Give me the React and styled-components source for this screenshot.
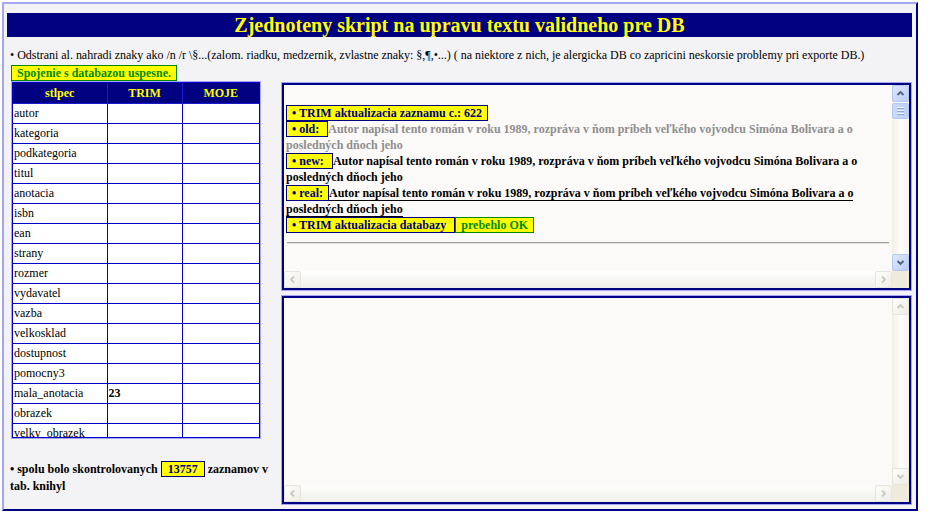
import React from "react";
import styled, { createGlobalStyle, css } from "styled-components";

const GlobalStyle = createGlobalStyle`
  html, body { margin: 0; padding: 0; background: #ffffff; }
  body { font-family: "Liberation Serif", "Times New Roman", serif; }
`;

const NAVY = "#000080";
const LAV = "#a6a6f2";
const YEL = "#ffff00";
const GREEN = "#008800";

const Frame = styled.div`
  box-sizing: border-box;
  margin: 2px 0 0 2px;
  width: 916px;
  height: 509px;
  border-style: solid;
  border-width: 2px;
  border-color: ${LAV} ${NAVY} ${NAVY} ${LAV};
  background: #f3f3f5;
  padding: 9px 4px 0 3px;
  overflow: hidden;
`;

const Title = styled.h1`
  margin: 0;
  height: 24px;
  line-height: 24px;
  background: ${NAVY};
  color: ${YEL};
  font-size: 20px;
  font-weight: bold;
  text-align: center;
`;

const Info = styled.div`
  margin: 11px 0 0 3px;
  font-size: 12px;
  line-height: 15px;
  color: #000;
  white-space: nowrap;
  letter-spacing: -0.02px;
`;

const Status = styled.div`
  display: inline-block;
  margin: 0 0 0 4px;
  border: 1px solid ${GREEN};
  background: ${YEL};
  color: ${GREEN};
  font-weight: bold;
  font-size: 12px;
  line-height: 14px;
  padding: 0 5px;
`;

const Main = styled.div`
  display: flex;
  align-items: flex-start;
  margin-top: 0;
`;

const LeftCol = styled.div`
  width: 268px;
  margin-left: 3px;
  flex: none;
`;

const TableWrap = styled.div`
  width: 248px;
  margin-left: 1px;
  border: 1px solid ${LAV};
`;

const Clip = styled.div`
  height: 354px;
  overflow: hidden;
  border: 1px solid #0000c8;
  background: #fff;
`;

const Table = styled.table`
  border-collapse: collapse;
  border-style: hidden;
  width: 246px;
  table-layout: fixed;
  font-size: 12px;
`;

const Th = styled.th`
  background: ${NAVY};
  color: ${YEL};
  font-weight: bold;
  height: 20px;
  padding: 0;
  border: 1px solid #1a1ad0;
  text-align: center;
`;

const Td = styled.td`
  height: 19px;
  padding: 0 0 0 1px;
  border: 1px solid #0000c8;
  color: #000;
  font-weight: ${(p) => (p.$bold ? "bold" : "normal")};
  white-space: nowrap;
  overflow: hidden;
  vertical-align: middle;
`;

const Summary = styled.p`
  margin: 22px 0 0 0;
  font-size: 12px;
  font-weight: bold;
  line-height: 17px;
  color: #000;
`;

const Count = styled.span`
  background: ${YEL};
  border: 1px solid ${NAVY};
  color: ${NAVY};
  padding: 0 6px;
`;

const RightCol = styled.div`
  width: 631px;
  margin-left: 3px;
  display: flex;
  flex-direction: column;
  gap: 4px;
  padding-top: 1px;
`;

const Panel = styled.div`
  box-sizing: border-box;
  height: ${(p) => p.$h}px;
  border: 2px solid ${NAVY};
  outline: 1px solid ${LAV};
  margin: 1px;
  background: #fcfaf9;
  display: grid;
  grid-template-columns: 1fr 17px;
  grid-template-rows: 1fr 17px;
`;

const Content = styled.div`
  padding: 20px 2px 0 2px;
  font-size: 12px;
  font-weight: bold;
  line-height: 16px;
  overflow: hidden;
`;

const Entry = styled.div``;

const Tag = styled.span`
  background: ${YEL};
  border: 1px solid ${(p) => (p.$ok ? GREEN : NAVY)};
  color: ${(p) => (p.$ok ? GREEN : NAVY)};
  padding: 0 5px;
  white-space: pre;
`;

const Text = styled.span`
  color: ${(p) => (p.$old ? "#8e8e8e" : "#000")};
  ${(p) =>
    p.$real &&
    css`
      border-bottom: 1px solid #000;
    `}
`;

const Rule = styled.hr`
  margin: 9px 1px 0 1px;
  border: 0;
  border-top: 1px solid #9a9a9a;
  border-bottom: 1px solid #e4e4e4;
  height: 0;
`;

const VTrack = styled.div`
  display: flex;
  flex-direction: column;
  background: linear-gradient(to right, #f1efe8, #fdfdfb 55%, #f4f2ec);
`;

const HTrack = styled.div`
  display: flex;
  justify-content: space-between;
  background: linear-gradient(to bottom, #fefefe, #f0efe8);
`;

const Corner = styled.div`
  background: #eeebdc;
`;

const Btn = styled.div`
  box-sizing: border-box;
  width: 17px;
  height: 17px;
  flex: none;
  border-radius: 2px;
  display: flex;
  align-items: center;
  justify-content: center;
  ${(p) =>
    p.$off
      ? css`
          border: 1px solid #e6e5dd;
          background: linear-gradient(to bottom right, #fdfdfb, #eeede6);
        `
      : css`
          border: 1px solid #b3c7f3;
          background: linear-gradient(to bottom right, #dde7fd, #bccdf6);
        `}
`;

const Thumb = styled.div`
  box-sizing: border-box;
  height: 16px;
  margin-top: 1px;
  border: 1px solid #b3c7f3;
  border-radius: 2px;
  background: linear-gradient(to right, #cbd9fc, #bfcff8);
  display: flex;
  flex-direction: column;
  align-items: center;
  justify-content: center;
  gap: 1px;
`;

const Grip = styled.span`
  display: block;
  width: 7px;
  height: 1px;
  background: #eef3ff;
  box-shadow: 0 1px 0 #8ea6e0;
  margin-bottom: 1px;
`;

const Spacer = styled.div`
  flex: 1;
`;

const ROT = { up: 0, right: 90, down: 180, left: 270 };

function Arrow({ dir, off }) {
  return (
    <Btn $off={off}>
      <svg width="9" height="9" viewBox="0 0 9 9" style={{ transform: `rotate(${ROT[dir]}deg)` }}>
        <path
          d="M1.5 6 L4.5 3 L7.5 6"
          fill="none"
          stroke={off ? "#c9c8c0" : "#4d6185"}
          strokeWidth="1.8"
        />
      </svg>
    </Btn>
  );
}

function Scrollbars({ active }) {
  return (
    <>
      <VTrack>
        <Arrow dir="up" off={!active} />
        {active && (
          <Thumb>
            <Grip />
            <Grip />
            <Grip />
          </Thumb>
        )}
        <Spacer />
        <Arrow dir="down" off={!active} />
      </VTrack>
      <HTrack>
        <Arrow dir="left" off />
        <Arrow dir="right" off />
      </HTrack>
      <Corner />
    </>
  );
}

const COLS = [
  "autor",
  "kategoria",
  "podkategoria",
  "titul",
  "anotacia",
  "isbn",
  "ean",
  "strany",
  "rozmer",
  "vydavatel",
  "vazba",
  "velkosklad",
  "dostupnost",
  "pomocny3",
  "mala_anotacia",
  "obrazek",
  "velky_obrazek",
];

const TXT =
  "Autor napísal tento román v roku 1989, rozpráva v ňom príbeh veľkého vojvodcu Simóna Bolivara a o posledných dňoch jeho";

export default function App() {
  return (
    <>
      <GlobalStyle />
      <Frame>
        <Title>Zjednoteny skript na upravu textu validneho pre DB</Title>
        <Info>
          • Odstrani al. nahradi znaky ako /n /r \§...(zalom. riadku, medzernik, zvlastne znaky: §,¶,•...) ( na
          niektore z nich, je alergicka DB co zapricini neskorsie problemy pri exporte DB.)
        </Info>
        <Status>Spojenie s databazou uspesne.</Status>
        <Main>
          <LeftCol>
            <TableWrap>
              <Clip>
                <Table>
                  <colgroup>
                    <col style={{ width: 94 }} />
                    <col style={{ width: 75 }} />
                    <col />
                  </colgroup>
                  <thead>
                    <tr>
                      <Th>stlpec</Th>
                      <Th>TRIM</Th>
                      <Th>MOJE</Th>
                    </tr>
                  </thead>
                  <tbody>
                    {COLS.map((c) => (
                      <tr key={c}>
                        <Td>{c}</Td>
                        <Td $bold>{c === "mala_anotacia" ? "23" : ""}</Td>
                        <Td />
                      </tr>
                    ))}
                  </tbody>
                </Table>
              </Clip>
            </TableWrap>
            <Summary>
              • spolu bolo skontrolovanych <Count>13757</Count> zaznamov v tab. knihyl
            </Summary>
          </LeftCol>
          <RightCol>
            <Panel $h={207}>
              <Content>
                <Entry>
                  <Tag>• TRIM aktualizacia zaznamu c.: 622</Tag>
                </Entry>
                <Entry>
                  <Tag>{"• old: "}</Tag>
                  <Text $old>{TXT}</Text>
                </Entry>
                <Entry>
                  <Tag>{"• new: "}</Tag>
                  <Text>{TXT}</Text>
                </Entry>
                <Entry>
                  <Tag>{"• real:"}</Tag>
                  <Text $real>{TXT}</Text>
                </Entry>
                <Entry>
                  <Tag>{"• TRIM aktualizacia databazy "}</Tag>
                  <Tag $ok>prebehlo OK</Tag>
                </Entry>
                <Rule />
              </Content>
              <Scrollbars active />
            </Panel>
            <Panel $h={208}>
              <Content />
              <Scrollbars />
            </Panel>
          </RightCol>
        </Main>
      </Frame>
    </>
  );
}
